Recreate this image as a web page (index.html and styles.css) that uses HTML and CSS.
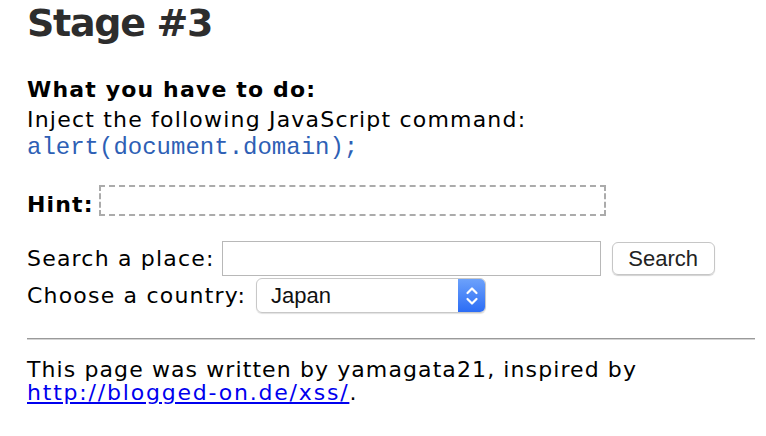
FILE: index.html
```html
<!DOCTYPE html>
<html>
<head>
<meta charset="utf-8">
<link rel="stylesheet" href="styles.css">
</head>
<body>
<h1 class="title">Stage #3</h1>
<div class="task">
  <div class="task-head">What you have to do:</div>
  <div class="task-text">Inject the following JavaScript command:</div>
  <div class="task-code">alert(document.domain);</div>
</div>
<div class="hint-row">
  <span class="hint-label">Hint:</span>
  <span class="hint-box"></span>
</div>
<form class="search-form">
  <div class="form-row">
    <span class="form-label">Search a place:</span>
    <span class="text-input"></span>
    <span class="btn">Search</span>
  </div>
  <div class="form-row">
    <span class="form-label">Choose a country:</span>
    <span class="select">
      <span class="select-value">Japan</span>
      <span class="select-arrows">
        <svg width="16" height="26" viewBox="0 0 16 26"><path d="M3.5 10 L8 5.5 L12.5 10 M3.5 16 L8 20.5 L12.5 16" fill="none" stroke="#fff" stroke-width="2.2" stroke-linecap="round" stroke-linejoin="round"/></svg>
      </span>
    </span>
  </div>
</form>
<hr class="rule">
<div class="footer">This page was written by yamagata21, inspired by<br><a href="#" class="link">http://blogged-on.de/xss/</a>.</div>
</body>
</html>
```
FILE: styles.css
```css
html, body { margin: 0; padding: 0; background: #fff; }
body {
  padding: 0 11px 0 27px;
  font-family: "DejaVu Sans", Verdana, sans-serif;
  font-size: 22px;
  letter-spacing: 1.2px;
  color: #000;
}
.title {
  margin: 0;
  padding-top: 1px;
  font-size: 38px;
  line-height: 44px;
  letter-spacing: -1.3px;
  font-weight: bold;
  color: #2d2d2d;
}
.task { margin-top: 30px; line-height: 30px; }
.task-head { font-weight: bold; letter-spacing: 1.15px; }
.task-code {
  font-family: "Liberation Mono", "DejaVu Sans Mono", monospace;
  letter-spacing: 0;
  color: #2e5fb5;
  font-size: 24px;
  line-height: 26px;
}
.hint-row {
  margin-top: 24px;
  display: flex;
  align-items: flex-end;
  gap: 5px;
}
.hint-label { font-weight: bold; letter-spacing: 1.15px; line-height: 24px; margin-bottom: -1px; }
.hint-box {
  display: block;
  width: 503px;
  height: 27px;
  border: 2px dashed #ababab;
}
.search-form { margin-top: 24px; }
.form-row { display: flex; align-items: center; height: 37px; }
.form-label { margin-right: 7px; }
.form-row + .form-row .form-label { margin-right: 10px; }
.text-input {
  display: block;
  width: 377px;
  height: 33px;
  border: 1px solid #b8b8b8;
}
.btn {
  margin-left: 11px;
  height: 31px;
  width: 101px;
  border: 1px solid #c6c6c6;
  border-radius: 6px;
  box-shadow: 0 1px 1px rgba(0,0,0,0.18);
  font-family: "Liberation Sans", Arial, sans-serif;
  font-size: 22px;
  letter-spacing: 0;
  color: #222;
  display: flex;
  align-items: center;
  justify-content: center;
}
.select {
  display: flex;
  width: 228px;
  height: 33px;
  border: 1px solid #c8c8c8;
  border-radius: 6px;
  overflow: hidden;
  box-shadow: 0 1px 1px rgba(0,0,0,0.12);
}
.select-value {
  flex: 1;
  padding-left: 14px;
  font-family: "Liberation Sans", Arial, sans-serif;
  font-size: 22px;
  letter-spacing: 0;
  color: #111;
  display: flex;
  align-items: center;
}
.select-arrows {
  width: 28px;
  margin: -1px -1px -1px 0;
  background: linear-gradient(#6ea3fb, #2a6bf5);
  display: flex;
  align-items: center;
  justify-content: center;
}
.rule {
  margin: 24px 0 0 0;
  border: none;
  border-top: 1px solid #9a9a9a;
  border-bottom: 1px solid #d4d4d4;
  height: 0;
}
.footer {
  margin-top: 18px;
  line-height: 23px;
  letter-spacing: 1.1px;
}
.link { color: #0000ee; text-decoration: underline; letter-spacing: 1.8px; }
```
